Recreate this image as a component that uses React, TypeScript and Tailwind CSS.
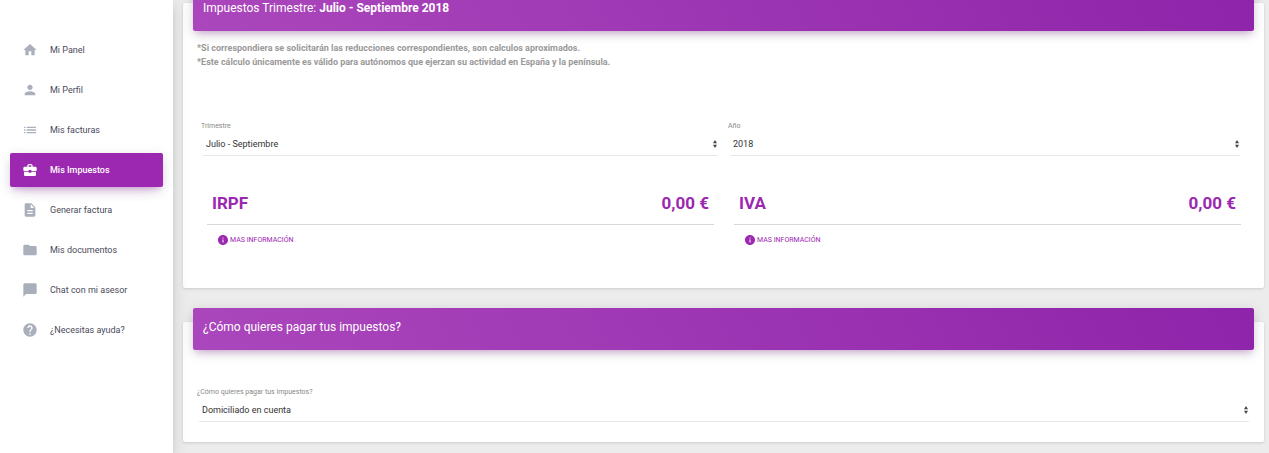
import type { ReactNode } from "react";
import type { IconType } from "react-icons";
import {
  MdBusinessCenter,
  MdChatBubble,
  MdDescription,
  MdFolder,
  MdHelp,
  MdHome,
  MdInfo,
  MdList,
  MdPerson,
} from "react-icons/md";

type NavItem = { label: string; icon: IconType; active?: boolean };

const navItems: NavItem[] = [
  { label: "Mi Panel", icon: MdHome },
  { label: "Mi Perfil", icon: MdPerson },
  { label: "Mis facturas", icon: MdList },
  { label: "Mis Impuestos", icon: MdBusinessCenter, active: true },
  { label: "Generar factura", icon: MdDescription },
  { label: "Mis documentos", icon: MdFolder },
  { label: "Chat con mi asesor", icon: MdChatBubble },
  { label: "¿Necesitas ayuda?", icon: MdHelp },
];

function Sidebar() {
  return (
    <nav className="relative z-10 w-[173px] shrink-0 bg-white px-2.5 pt-[33px] shadow-[0_3px_17px_0_rgba(0,0,0,0.12),0_5px_7px_-3px_rgba(0,0,0,0.2)]">
      <ul className="flex flex-col gap-1.5">
        {navItems.map(({ label, icon: Icon, active }) => (
          <li key={label}>
            <a
              href="#"
              aria-current={active ? "page" : undefined}
              className={
                active
                  ? "flex h-[34px] items-center gap-3 rounded-xs bg-[#9c27b0] px-3 text-[9px] leading-[14px] font-medium text-white shadow-[0_8px_13px_-7px_rgba(156,39,176,0.28),0_3px_13px_0_rgba(0,0,0,0.12),0_5px_5px_-3px_rgba(156,39,176,0.2)]"
                  : "flex h-[34px] items-center gap-3 rounded-xs px-3 text-[9px] leading-[14px] text-[#4a4a5a]"
              }
            >
              <Icon className={active ? "size-4 text-white" : "size-4 text-[#a9afbb]"} />
              {label}
            </a>
          </li>
        ))}
      </ul>
    </nav>
  );
}

function Card({ title, children }: { title: ReactNode; children: ReactNode }) {
  return (
    <section className="rounded-xs bg-white px-2.5 shadow-[0_1px_3px_0_rgba(0,0,0,0.14)]">
      <header className="relative -top-3.5 -mb-3.5 h-[42px] rounded-xs bg-[linear-gradient(60deg,#ab47bc,#8e24aa)] px-2.5 pt-2.5 shadow-[0_3px_13px_0_rgba(0,0,0,0.14),0_5px_7px_-3px_rgba(156,39,176,0.3)]">
        <h2 className="text-[12px] leading-[18px] text-white">{title}</h2>
      </header>
      {children}
    </section>
  );
}

function SelectField({ id, label, options }: { id: string; label: string; options: string[] }) {
  return (
    <div className="min-w-0">
      <label htmlFor={id} className="block text-[7px] leading-[10px] text-[#888888]">
        {label}
      </label>
      <div className="relative mt-px ml-0.5">
        <select
          id={id}
          className="block h-6 w-full appearance-none border-b border-[#e7e7e7] bg-transparent pt-0.5 pl-[3px] text-[9px] text-[#333333] outline-none"
        >
          {options.map((option) => (
            <option key={option}>{option}</option>
          ))}
        </select>
        <svg
          viewBox="0 0 4 8"
          aria-hidden="true"
          className="pointer-events-none absolute top-2 right-px h-2 w-1 fill-[#444444]"
        >
          <path d="M2 0 4 3.2H0ZM2 8 0 4.8H4Z" />
        </svg>
      </div>
    </div>
  );
}

function TaxTotal({ name, amount }: { name: string; amount: string }) {
  return (
    <div>
      <div className="flex items-center justify-between border-b border-[#d8d8d8] px-[5px] pb-[9px] text-[17px] leading-6 font-bold text-[#9c27b0]">
        <h3>{name}</h3>
        <span>{amount}</span>
      </div>
      <button
        type="button"
        className="mt-[9px] ml-2.5 flex h-3 items-center gap-px text-[7px] text-[#9c27b0] uppercase"
      >
        <MdInfo className="size-3" />
        Mas información
      </button>
    </div>
  );
}

export default function App() {
  return (
    <div className="flex min-h-screen overflow-hidden bg-[#ececec] font-['Roboto',sans-serif]">
      <Sidebar />
      <main className="flex min-w-0 flex-1 flex-col gap-[34px] pt-[3px] pr-[5px] pb-2.5 pl-2.5">
        <Card
          title={
            <>
              Impuestos Trimestre: <strong className="font-bold">Julio - Septiembre 2018</strong>
            </>
          }
        >
          <div className="px-1 pt-2.5 text-[9px] leading-[14px] font-bold text-[#999999]">
            <p>*Si correspondiera se solicitarán las reducciones correspondientes, son calculos aproximados.</p>
            <p>*Este cálculo únicamente es válido para autónomos que ejerzan su actividad en España y la península.</p>
          </div>
          <div className="mt-[52px] mr-3.5 ml-2 grid grid-cols-[517fr_512fr] gap-2.5">
            <SelectField
              id="trimestre"
              label="Trimestre"
              options={["Julio - Septiembre", "Octubre - Diciembre", "Enero - Marzo", "Abril - Junio"]}
            />
            <SelectField id="anio" label="Año" options={["2018", "2017"]} />
          </div>
          <div className="mt-[35px] mr-[13px] ml-3.5 grid grid-cols-2 gap-5 pb-[42px]">
            <TaxTotal name="IRPF" amount="0,00 €" />
            <TaxTotal name="IVA" amount="0,00 €" />
          </div>
        </Card>
        <Card title="¿Cómo quieres pagar tus impuestos?">
          <div className="mr-[5px] ml-1 pt-[37px] pb-5">
            <SelectField
              id="pago"
              label="¿Cómo quieres pagar tus impuestos?"
              options={["Domiciliado en cuenta", "Transferencia"]}
            />
          </div>
        </Card>
      </main>
    </div>
  );
}
